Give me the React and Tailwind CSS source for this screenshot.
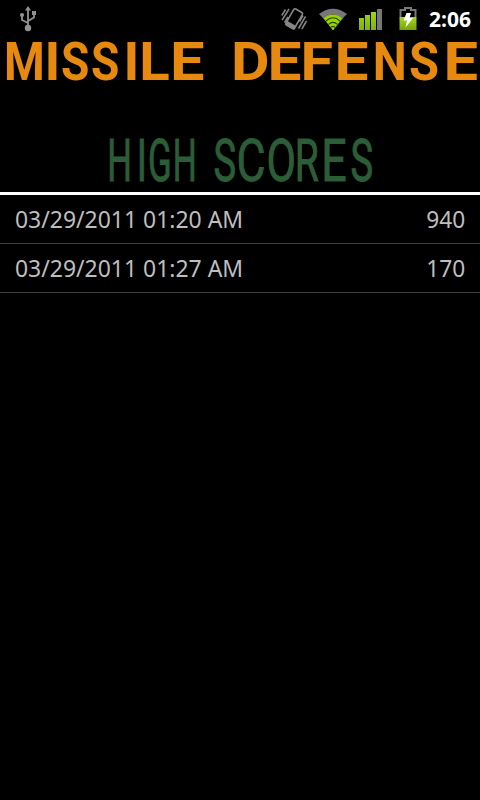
const scores = [
  { date: "03/29/2011 01:20 AM", score: 940 },
  { date: "03/29/2011 01:27 AM", score: 170 },
];

// advance, left bearing and ink width of each letter, in font units
const boldMetrics = {
  M: [1788, 115, 1558],
  I: [599, 147, 303],
  S: [1267, 63, 1139],
  L: [1108, 116, 963],
  E: [1149, 116, 981],
  D: [1309, 116, 1135],
  F: [1113, 116, 959],
  N: [1441, 116, 1208],
};

const regularMetrics = {
  H: [1460, 168, 1122],
  I: [557, 183, 191],
  G: [1395, 124, 1149],
  S: [1215, 86, 1049],
  C: [1333, 118, 1126],
  O: [1408, 117, 1172],
  R: [1261, 168, 1043],
  E: [1164, 168, 936],
};

// letter, left edge, right edge
const missile = [["M", 6.5, 42], ["I", 48.5, 56.5], ["S", 62.5, 88], ["S", 92.5, 118], ["I", 127.5, 135.5], ["L", 142.5, 169], ["E", 173.5, 203]];
const defense = [["D", 234.5, 268], ["E", 271, 300], ["F", 304, 332], ["E", 338, 367], ["N", 375.5, 404], ["S", 410.5, 437.5], ["E", 447, 476.5]];
const high = [["H", 110, 129], ["I", 140, 143.5], ["G", 150, 169.5], ["H", 175.5, 194]];
const scoresWord = [["S", 215, 234.5], ["C", 239, 263.5], ["O", 269, 293.5], ["R", 298, 318], ["E", 325, 345.5], ["S", 352, 371.5]];

function Word({ letters, metrics, y }) {
  return (
    <text y={y}>
      {letters.map(([char, left, right]) => {
        const [advance, bearing, ink] = metrics[char];
        const scale = (right - left) / ink;
        return (
          <tspan key={left} x={left - bearing * scale} textLength={advance * scale} lengthAdjust="spacingAndGlyphs">
            {char}
          </tspan>
        );
      })}
    </text>
  );
}

function UsbIcon() {
  return (
    <svg className="w-[18px] h-[26px]" viewBox="0 0 18 26" fill="none" stroke="#929292" strokeWidth="1.8">
      <path d="M9 3v20M9 17l-6-3V9M9 15l6-3.500V8" />
      <path d="M9 0l3 4.5H6z" fill="#929292" stroke="none" />
      <circle cx="3" cy="9" r="2.1" fill="#929292" stroke="none" />
      <path d="M13 5h4v4h-4z" fill="#929292" stroke="none" />
      <circle cx="9" cy="22" r="3.2" fill="#929292" stroke="none" />
    </svg>
  );
}

function VibrateIcon() {
  return (
    <svg className="w-[26px] h-6" viewBox="0 0 26 24" fill="none" stroke="#868686">
      <g transform="rotate(30 13 12)">
        <rect x="8" y="2.5" width="10" height="18.500" rx="1.5" strokeWidth="1.6" />
        <path d="M7.500 17h11v3q0 1.500-1.500 1.500H9q-1.500 0-1.500-1.500z" fill="#868686" stroke="none" />
      </g>
      <path d="M.8 8.500L4.500 2.500M1.200 13L8 2M3.500 15.500L7 10M17.500 21.500L24.500 9.500M20.800 22L25.500 14M18.500 14.500L22 8.500" strokeWidth="1.500" />
    </svg>
  );
}

function WifiIcon() {
  return (
    <svg className="w-[30px] h-6" viewBox="0 0 30 24">
      <path d="M1 7Q15-3.500 29 7l-5 5Q15 3 6 12z" fill="#777" />
      <path d="M5.500 11.500Q15 3.500 24.500 11.500L16.500 21.500Q15 24.500 13.500 21.500z" fill="#99d400" />
      <path d="M8 14Q15 7.500 22 14M10.500 17.300Q15 13.500 19.500 17.300M13 20.300Q15 18.500 17 20.300" fill="none" stroke="#274000" strokeWidth="1.1" />
    </svg>
  );
}

function SignalIcon() {
  return (
    <svg className="w-6 h-[22px]" viewBox="0 0 24 22">
      <defs>
        <linearGradient id="signal" x1="0" y1="0" x2="0" y2="22" gradientUnits="userSpaceOnUse">
          <stop offset="0" stopColor="#a4e000" />
          <stop offset="1" stopColor="#7fae10" />
        </linearGradient>
      </defs>
      <g fill="url(#signal)">
        <rect x="0" y="9" width="5" height="12" />
        <rect x="6" y="6" width="5" height="15" />
        <rect x="12" y="3" width="5" height="18" />
      </g>
      <rect x="18" y="0" width="5" height="21" fill="#777" />
    </svg>
  );
}

function BatteryIcon() {
  return (
    <svg className="w-[18px] h-6" viewBox="0 0 18 24">
      <defs>
        <linearGradient id="battery" x1="0" y1="0" x2="0" y2="1">
          <stop offset="0" stopColor="#a4d81c" />
          <stop offset="1" stopColor="#75a30c" />
        </linearGradient>
      </defs>
      <path d="M1.500 10V3H6V1h6v2h4.500v7" fill="none" stroke="#777" strokeWidth="2" />
      <path d="M.5 10h17v13H.5z" fill="url(#battery)" />
      <path d="M7.500 6h4.500l-1.500 5h3.500L6.500 20.500l1.500-7H4.500z" fill="#fff" />
    </svg>
  );
}

function StatusBar() {
  return (
    <header className="flex h-[38px] items-start pt-[6px] pl-[19px] pr-[9px]">
      <UsbIcon />
      <div className="ml-auto flex items-start">
        <div className="mr-[11px] pt-px"><VibrateIcon /></div>
        <div className="mr-[11px] pt-px"><WifiIcon /></div>
        <div className="mr-[16px] pt-[3px]"><SignalIcon /></div>
        <div className="mr-3 pt-px"><BatteryIcon /></div>
        <span className="font-['Open_Sans',sans-serif] text-[21px] leading-[27px] font-bold text-white">2:06</span>
      </div>
    </header>
  );
}

export default function App() {
  return (
    <div className="flex h-[800px] w-[480px] flex-col overflow-hidden bg-black">
      <StatusBar />
      <h1>
        <svg className="block h-[62px] w-[480px] overflow-visible fill-[#e6890e] font-['Roboto',sans-serif] text-[53px] font-bold" viewBox="0 38 480 62">
          <Word letters={missile} metrics={boldMetrics} y={80} />
          <Word letters={defense} metrics={boldMetrics} y={80} />
        </svg>
      </h1>
      <h2 className="border-b-[3px] border-white">
        <svg className="block h-[92px] w-[480px] overflow-visible fill-[#2b5d36] stroke-[#2b5d36] stroke-1 font-['Roboto',sans-serif] text-[60px] font-normal" viewBox="0 100 480 92">
          <Word letters={high} metrics={regularMetrics} y={181} />
          <Word letters={scoresWord} metrics={regularMetrics} y={181} />
        </svg>
      </h2>
      <ul className="font-['Noto_Sans',sans-serif] text-2xl text-[#bebebe]">
        {scores.map((row) => (
          <li key={row.date} className="flex h-[49px] items-center justify-between border-b border-[#3c3c3c] px-[15px]">
            <span className="origin-left scale-x-[0.956]">{row.date}</span>
            <span className="origin-right scale-x-[0.945]">{row.score}</span>
          </li>
        ))}
      </ul>
    </div>
  );
}
